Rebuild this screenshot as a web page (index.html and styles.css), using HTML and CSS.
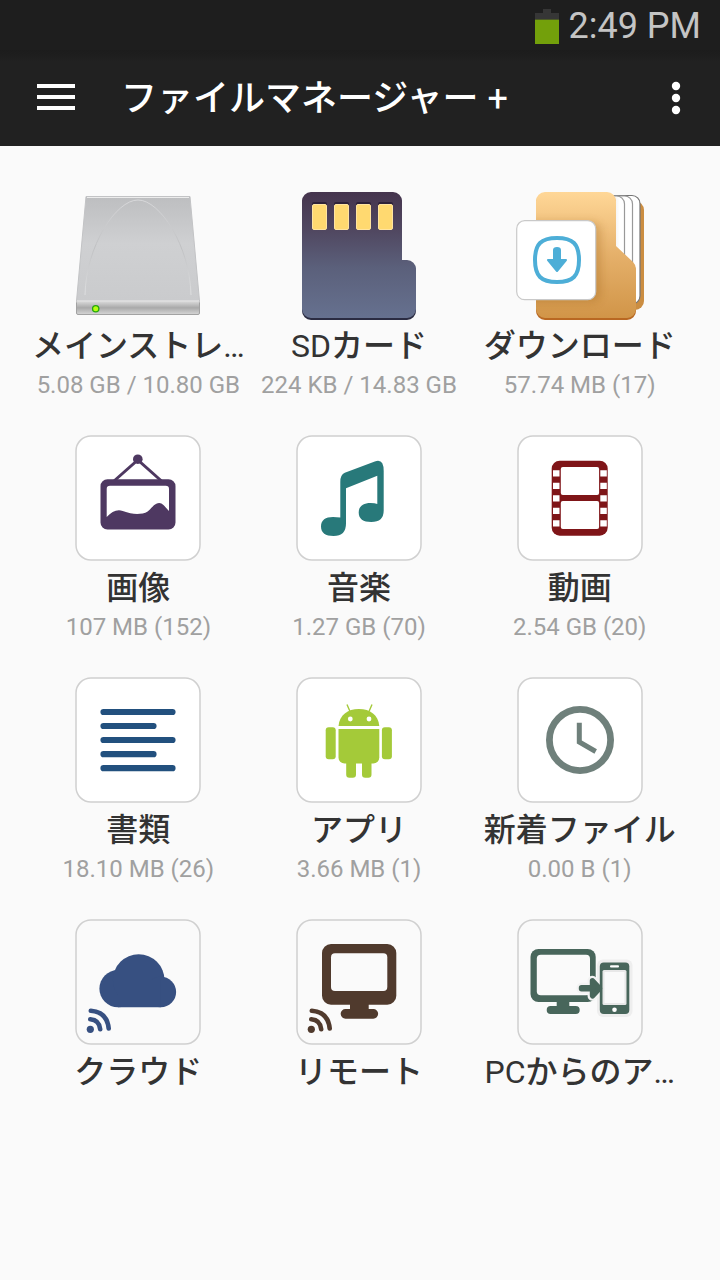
FILE: index.html
```html
<!DOCTYPE html>
<html lang="ja">
<head>
<meta charset="utf-8">
<meta name="viewport" content="width=device-width, initial-scale=1">
<title>ファイルマネージャー +</title>
<link rel="stylesheet" href="styles.css">
</head>
<body>
<div class="status-bar">
  <svg class="battery" viewBox="0 0 24 36" aria-hidden="true"><path fill="#363636" d="M8 1h8v4h8v8H0V5h8z"/><path fill="#73a00b" d="M0 12h24v24H0z"/><path fill="#4c5a25" d="M0 11h24v1H0z"/></svg>
  <span class="clock">2:49 PM</span>
</div>
<header class="app-bar">
  <button class="bar-button" type="button" aria-label="メニュー">
    <svg class="menu-icon" viewBox="0 0 38 28" aria-hidden="true"><path fill="#fff" d="M0 0h38v4H0zM0 11h38v4H0zM0 22h38v4H0z"/></svg>
  </button>
  <h1 class="title">ファイルマネージャー <span class="latin">+</span></h1>
  <button class="bar-button more" type="button" aria-label="その他">
    <svg class="more-icon" viewBox="0 0 10 34" aria-hidden="true"><g fill="#fff"><circle cx="5" cy="5" r="4.2"/><circle cx="5" cy="17" r="4.2"/><circle cx="5" cy="29" r="4.2"/></g></svg>
  </button>
</header>
<main class="grid">
  <button class="tile" type="button">
    <svg class="icon" viewBox="0 0 128 128" aria-hidden="true">
      <defs>
        <linearGradient id="driveTop" x1="0" y1="0" x2="0" y2="1"><stop offset="0" stop-color="#bdbec0"/><stop offset=".45" stop-color="#cfd0d2"/><stop offset="1" stop-color="#cacbcd"/></linearGradient>
        <linearGradient id="driveFront" x1="0" y1="0" x2="0" y2="1"><stop offset="0" stop-color="#dcdcdc"/><stop offset=".5" stop-color="#a9a9a9"/><stop offset="1" stop-color="#d6d6d6"/></linearGradient>
        <linearGradient id="arc" x1="0" y1="0" x2="0" y2="1"><stop offset="0" stop-color="#d8d8da"/><stop offset=".5" stop-color="#bfc0c2"/><stop offset="1" stop-color="#dedfe0"/></linearGradient>
      </defs>
      <path fill="url(#driveTop)" stroke="#c2c3c5" d="M12 4.500h104L125.500 109H2.500z"/>
      <path fill="none" stroke="#ececec" d="M13 5.500h102"/>
      <path fill="none" stroke="url(#arc)" d="M11 103C12 54 42 8 64 8s52 46 53 95"/>
      <rect x="2.500" y="109" width="123" height="13.500" rx="1.500" fill="url(#driveFront)" stroke="#a2a2a2"/>
      <path stroke="#e8e8e8" stroke-width="1.500" d="M3 109h122"/>
      <circle cx="21.700" cy="116.700" r="3.800" fill="#25a70c"/><circle cx="21.700" cy="116.700" r="2.500" fill="#b6ff12"/>
    </svg>
    <span class="name">メインストレ<span class="latin">…</span></span>
    <span class="detail">5.08 GB / 10.80 GB</span>
  </button>
  <button class="tile" type="button">
    <svg class="icon" viewBox="0 0 128 128" aria-hidden="true">
      <defs><linearGradient id="sd" x1="0" y1="0" x2="0" y2="1"><stop offset="0" stop-color="#45344d"/><stop offset=".3" stop-color="#504760"/><stop offset=".6" stop-color="#5b607b"/><stop offset="1" stop-color="#66718f"/></linearGradient></defs>
      <path fill="#2b2c42" d="M16 2h82a9 9 0 0 1 9 9v59h5a9 9 0 0 1 9 9v40a9 9 0 0 1-9 9H16a9 9 0 0 1-9-9V11a9 9 0 0 1 9-9z"/>
      <path fill="url(#sd)" d="M16 0h82a9 9 0 0 1 9 9v59h5a9 9 0 0 1 9 9v40a9 9 0 0 1-9 9H16a9 9 0 0 1-9-9V9a9 9 0 0 1 9-9z"/>
      <g fill="#2e2239"><rect x="17" y="10" width="15" height="10" rx="2"/><rect x="39" y="10" width="15" height="10" rx="2"/><rect x="61" y="10" width="15" height="10" rx="2"/><rect x="83" y="10" width="15" height="10" rx="2"/></g>
      <g fill="#ffd970" stroke="#ffe4a0"><rect x="17.500" y="12.500" width="14" height="25" rx="1.500"/><rect x="39.500" y="12.500" width="14" height="25" rx="1.500"/><rect x="61.500" y="12.500" width="14" height="25" rx="1.500"/><rect x="83.500" y="12.500" width="14" height="25" rx="1.500"/></g>
    </svg>
    <span class="name"><span class="latin">SD</span>カード</span>
    <span class="detail">224 KB / 14.83 GB</span>
  </button>
  <button class="tile" type="button">
    <svg class="icon" viewBox="0 0 128 128" aria-hidden="true">
      <defs>
        <linearGradient id="folder" x1="0" y1="0" x2="0" y2="1"><stop offset="0" stop-color="#ffd797"/><stop offset=".5" stop-color="#e5b06a"/><stop offset="1" stop-color="#d19548"/></linearGradient>
        <linearGradient id="paper" x1="0" y1="0" x2="1" y2="0"><stop offset="0" stop-color="#e0e0e0"/><stop offset=".7" stop-color="#fff"/></linearGradient>
        <filter id="soft" x="-20%" y="-20%" width="150%" height="150%"><feGaussianBlur stdDeviation="4"/></filter>
        <clipPath id="front"><path d="M29 0h62a9 9 0 0 1 9 9v45l17 16q3 3 3 7v42a9 9 0 0 1-9 9H29a9 9 0 0 1-9-9V9a9 9 0 0 1 9-9z"/></clipPath>
      </defs>
      <path fill="#cb8d41" d="M98 9h21a9 9 0 0 1 9 9v91a9 9 0 0 1-9 9H98z"/>
      <g fill="url(#paper)" stroke-width="1.200"><path stroke="#747474" d="M92 3.500h24a8 8 0 0 1 8 8V104a8 8 0 0 1-8 8H92z"/><path stroke="#999" d="M92 4h16a8 8 0 0 1 8.500 8v98H92z"/><path stroke="#999" d="M92 4h8a8 8 0 0 1 8.500 8v98H92z"/></g>
      <path fill="#b96822" d="M29 2h62a9 9 0 0 1 9 9v45l17 16q3 3 3 7v40a9 9 0 0 1-9 9H29a9 9 0 0 1-9-9V11a9 9 0 0 1 9-9z"/>
      <path fill="url(#folder)" d="M29 0h62a9 9 0 0 1 9 9v45l17 16q3 3 3 7v40a9 9 0 0 1-9 9H29a9 9 0 0 1-9-9V9a9 9 0 0 1 9-9z"/>
      <g clip-path="url(#front)"><rect x="5" y="30" width="80" height="80" rx="9" fill="#9b6014" opacity=".3" filter="url(#soft)"/></g>
      <rect x=".700" y="28.700" width="79" height="79" rx="8" fill="#fff" stroke="#c9c9c9" stroke-width="1.200"/>
      <path fill="none" stroke="#4daed7" stroke-width="4" d="M41 46c16 0 22 6 22 22s-6 22-22 22-22-6-22-22 6-22 22-22z"/>
      <path fill="#4daed7" stroke="#4daed7" stroke-linejoin="round" stroke-width="2" d="M38 58q0-2 3-2t3 2v10h6l-9 11-9-11h6z"/>
    </svg>
    <span class="name">ダウンロード</span>
    <span class="detail">57.74 MB (17)</span>
  </button>

  <button class="tile" type="button">
    <svg class="icon" viewBox="0 0 128 128" aria-hidden="true">
      <rect class="card" x="2" y="2" width="124" height="124" rx="15"/>
      <g fill="#4e3861"><circle cx="63.800" cy="25.200" r="4.800"/><path fill="none" stroke="#4e3861" stroke-width="3" d="M40 47l23.800-21L87.500 47"/>
      <path fill-rule="evenodd" d="M33.500 45.300h61a7 7 0 0 1 7 7v36.200a7 7 0 0 1-7 7h-61a7 7 0 0 1-7-7V52.300a7 7 0 0 1 7-7zM36 51.700q-3.300 0-3.300 3.300v28c5-5 10-8 16-6 8 2.500 12 3.500 20 2.500 8-1 10-10.500 16.500-10.500 3.500 0 5.500 3.500 9.800 8V55q0-3.300-3.300-3.300z"/></g>
    </svg>
    <span class="name">画像</span>
    <span class="detail">107 MB (152)</span>
  </button>
  <button class="tile" type="button">
    <svg class="icon" viewBox="0 0 128 128" aria-hidden="true">
      <rect class="card" x="2" y="2" width="124" height="124" rx="15"/>
      <path fill="#28797a" d="M45.300 83.500V48q0-7.500 4.500-9.200l30-11.400q8.900-3.400 8.900 9.600v39.500q0 11.500-12.500 11.500c-8 0-12.500-3-12.500-9.500S68.500 69 75.500 69q4.500 0 6.800 1V41.700L51 54.300v35.200q0 12.500-12.500 12.500C30.500 102 26 99 26 92.500S30.500 83 38 83z"/>
    </svg>
    <span class="name">音楽</span>
    <span class="detail">1.27 GB (70)</span>
  </button>
  <button class="tile" type="button">
    <svg class="icon" viewBox="0 0 128 128" aria-hidden="true">
      <rect class="card" x="2" y="2" width="124" height="124" rx="15"/>
      <rect x="35.700" y="26.700" width="56" height="75" rx="8" fill="#7f1518"/>
      <g fill="#fff"><rect x="44.800" y="33" width="38.300" height="28" rx="2"/><rect x="44.800" y="67" width="38.300" height="28" rx="2"/>
      <path d="M37 36.200h6.500v6.200H37zM37 48.700h6.500v6.200H37zM37 61.200h6.500v6.200H37zM37 73.700h6.500v6.200H37zM37 86.200h6.500v6.200H37zM84.300 36.200h6.500v6.200h-6.500zM84.300 48.700h6.500v6.200h-6.500zM84.300 61.200h6.500v6.200h-6.500zM84.300 73.700h6.500v6.200h-6.500zM84.300 86.200h6.500v6.200h-6.500z"/></g>
    </svg>
    <span class="name">動画</span>
    <span class="detail">2.54 GB (20)</span>
  </button>

  <button class="tile" type="button">
    <svg class="icon" viewBox="0 0 128 128" aria-hidden="true">
      <rect class="card" x="2" y="2" width="124" height="124" rx="15"/>
      <path stroke="#22507e" stroke-width="6.200" stroke-linecap="round" d="M29.500 36h69M29.500 50h50M29.500 64h69M29.500 78.200h50M29.500 92.200h69"/>
    </svg>
    <span class="name">書類</span>
    <span class="detail">18.10 MB (26)</span>
  </button>
  <button class="tile" type="button">
    <svg class="icon" viewBox="0 0 128 128" aria-hidden="true">
      <rect class="card" x="2" y="2" width="124" height="124" rx="15"/>
      <g fill="#a4ca39"><path d="M43.500 50c1-11 9-17 20.400-17s19.400 6 20.400 17z"/><path d="M43.500 53h40.800v28.500a6 6 0 0 1-6 6H49.500a6 6 0 0 1-6-6z"/><rect x="30.700" y="51.300" width="10" height="32" rx="3"/><rect x="86.900" y="51.300" width="10" height="32" rx="3"/><path d="M51.200 86H61v12.500q0 3.200-3.200 3.200h-3.400q-3.200 0-3.200-3.200zM67 86h9.500v12.500q0 3.200-3.200 3.200h-3.100q-3.200 0-3.200-3.200z"/><path stroke="#a4ca39" stroke-width="1.400" d="M52 28.500l3 7M77 28.500l-3 7"/></g>
      <g fill="#fff"><circle cx="55.300" cy="43" r="2.400"/><circle cx="74" cy="43" r="2.400"/></g>
    </svg>
    <span class="name">アプリ</span>
    <span class="detail">3.66 MB (1)</span>
  </button>
  <button class="tile" type="button">
    <svg class="icon" viewBox="0 0 128 128" aria-hidden="true">
      <rect class="card" x="2" y="2" width="124" height="124" rx="15"/>
      <g fill="none" stroke="#6f807b"><circle cx="64" cy="64" r="30.600" stroke-width="6.800"/><path stroke-width="5" d="M63.300 46.700v19.300l16.400 9.500"/></g>
    </svg>
    <span class="name">新着ファイル</span>
    <span class="detail">0.00 B (1)</span>
  </button>

  <button class="tile" type="button">
    <svg class="icon" viewBox="0 0 128 128" aria-hidden="true">
      <rect class="card plain" x="2" y="2" width="124" height="124" rx="15"/>
      <g fill="#375081"><circle cx="44" cy="70.700" r="18.600"/><circle cx="64.700" cy="62" r="25.800"/><circle cx="86.800" cy="74" r="15.300"/><path d="M44 62h42.800v27.300H44z"/></g>
      <circle cx="16.300" cy="111.300" r="3.600" fill="#375081"/><path fill="none" stroke="#375081" stroke-width="4.600" stroke-linecap="round" d="M16.300 101.300q9 .700 9.900 10M16.800 92.800q16.200 1 17.900 17.700"/>
    </svg>
    <span class="name">クラウド</span>
  </button>
  <button class="tile" type="button">
    <svg class="icon" viewBox="0 0 128 128" aria-hidden="true">
      <rect class="card plain" x="2" y="2" width="124" height="124" rx="15"/>
      <rect x="27" y="26" width="74.300" height="60.700" rx="9" fill="#503a2d"/><rect x="36" y="35.200" width="56.300" height="37.800" rx="4" fill="#fafafa"/>
      <path fill="#503a2d" d="M55 86h18.700v5h4.600a4.800 4.800 0 0 1 0 9.700H50.500a4.800 4.800 0 0 1 0-9.700H55z"/>
      <circle cx="16.300" cy="111.300" r="3.600" fill="#503a2d"/><path fill="none" stroke="#503a2d" stroke-width="4.600" stroke-linecap="round" d="M16.300 101.300q9 .700 9.900 10M16.800 92.800q16.200 1 17.900 17.700"/>
    </svg>
    <span class="name">リモート</span>
  </button>
  <button class="tile" type="button">
    <svg class="icon" viewBox="0 0 128 128" aria-hidden="true">
      <rect class="card plain" x="2" y="2" width="124" height="124" rx="15"/>
      <rect x="14.500" y="31" width="65.200" height="53" rx="8" fill="#48665b"/><rect x="20.800" y="36.800" width="53.200" height="40.500" rx="4" fill="#fafafa"/>
      <path fill="#48665b" d="M40.700 83h12.600v5h6.400a4 4 0 0 1 0 8h-25a4 4 0 0 1 0-8h6z"/>
      <rect x="81" y="41.500" width="35.500" height="57.500" rx="6" fill="#eee"/>
      <path fill="#f3f3f3" stroke="#f3f3f3" stroke-width="10" stroke-linejoin="round" d="M65.500 69.800h11v-7l7 7.500-7 7.500v-7h-11z"/>
      <rect x="83.800" y="44.500" width="29.500" height="51.500" rx="4" fill="#48665b"/><rect x="86.500" y="52" width="24" height="35" rx="1.500" fill="#e8e8e8"/><rect x="88.500" y="54" width="20" height="31" fill="#fafafa"/>
      <rect x="94" y="47.200" width="9" height="2.300" rx="1" fill="#fff"/><circle cx="98.500" cy="91.700" r="2.300" fill="#fff"/>
      <path fill="#48665b" stroke="#48665b" stroke-width="5.400" stroke-linejoin="round" d="M65.500 69.800h11v-7l7 7.500-7 7.500v-7h-11z"/>
    </svg>
    <span class="name"><span class="latin">PC</span>からのア<span class="latin">…</span></span>
  </button>
</main>
</body>
</html>
```
FILE: styles.css
```css
* {
  box-sizing: border-box;
}

body {
  margin: 0;
  min-height: 100vh;
  background: #fafafa;
  color: #333;
  font-family: Roboto, "Noto Sans CJK JP", sans-serif;
}

button {
  padding: 0;
  border: 0;
  background: none;
  color: inherit;
  font: inherit;
  cursor: pointer;
}

svg {
  display: block;
}

.latin {
  font-weight: 400;
}

.status-bar {
  display: flex;
  align-items: center;
  justify-content: flex-end;
  gap: 10px;
  height: 50px;
  padding: 2px 19px 0;
  background: #1e1e1e;
}

.battery {
  width: 24px;
  height: 36px;
}

.clock {
  color: #c4c4c4;
  font-size: 36px;
  line-height: 48px;
}

.app-bar {
  display: flex;
  align-items: center;
  height: 96px;
  padding: 0 24px;
  background: linear-gradient(#1c1c1c, #212121 12px);
  color: #fff;
}

.bar-button {
  display: flex;
  align-items: center;
  justify-content: center;
  width: 64px;
  height: 64px;
}

.menu-icon {
  width: 38px;
  height: 28px;
}

.title {
  flex: 1;
  margin: 0;
  padding: 2px 0 0 33px;
  font-size: 36px;
  font-weight: 500;
  line-height: 48px;
  white-space: nowrap;
}

.more {
  width: 40px;
}

.more-icon {
  width: 10px;
  height: 34px;
}

.grid {
  display: grid;
  grid-template-columns: repeat(3, minmax(0, 1fr));
  row-gap: 34px;
  padding: 46px 30px 46px 28px;
}

.tile {
  display: flex;
  flex-direction: column;
  align-items: center;
  justify-content: flex-start;
}

.icon {
  width: 128px;
  height: 128px;
}

.card {
  fill: #fff;
  stroke: #d0d0d0;
  stroke-width: 1.5;
}

.plain {
  fill: #fafafa;
}

.name {
  padding-top: 2px;
  font-size: 32px;
  font-weight: 500;
  line-height: 48px;
  white-space: nowrap;
}

.detail {
  color: #a0a0a0;
  font-size: 24px;
  line-height: 30px;
  white-space: nowrap;
}
```
